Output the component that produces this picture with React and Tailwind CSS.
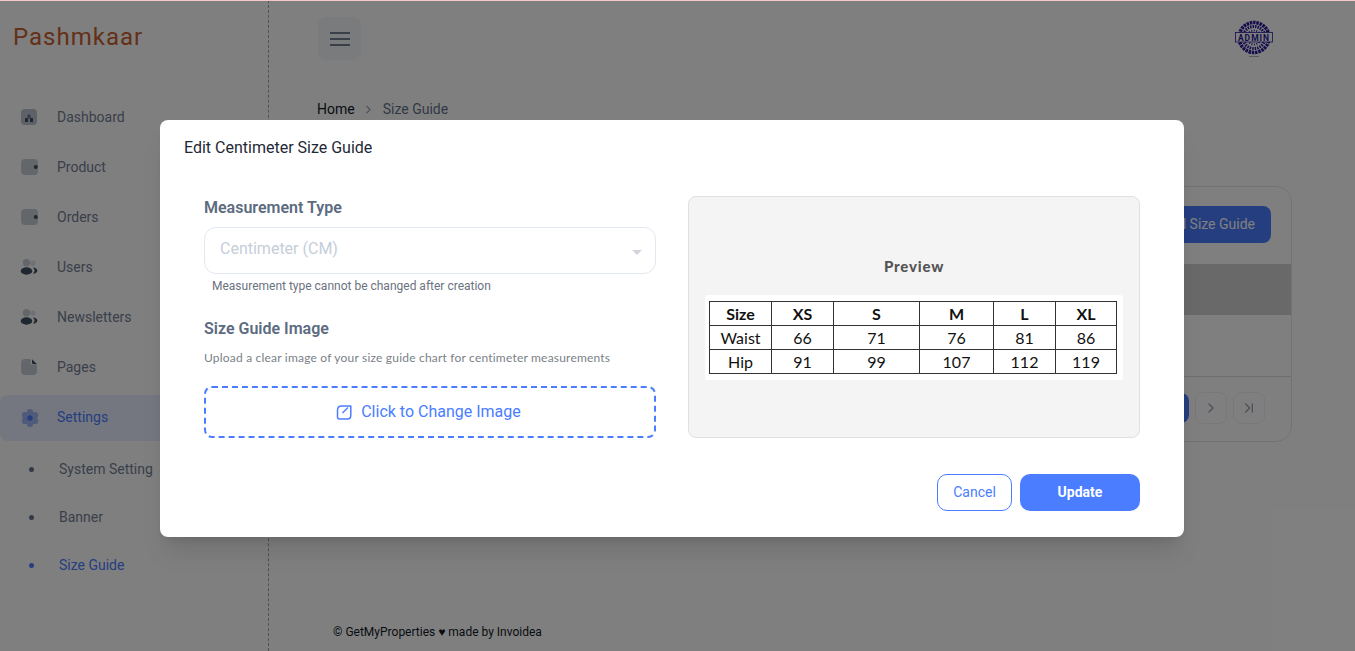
import { ChevronRight, ChevronLast } from 'lucide-react'

const DashboardIcon = () => (
  <svg width="18" height="18" viewBox="0 0 18 18" className="shrink-0">
    <rect x="1" y="1" width="16" height="16" rx="4" fill="#bcc5d0" />
    <rect x="5" y="10" width="3" height="4" rx="0.6" fill="#3f4f60" />
    <rect x="10" y="10" width="3" height="4" rx="0.6" fill="#3f4f60" />
    <rect x="7.500" y="6.500" width="3" height="4" rx="0.6" fill="#66768a" />
  </svg>
)

const WalletIcon = () => (
  <svg width="18" height="18" viewBox="0 0 18 18" className="shrink-0">
    <rect x="1" y="1" width="17" height="16" rx="4" fill="#c6ccd4" />
    <circle cx="15.800" cy="9" r="2" fill="#3f4f60" />
  </svg>
)

const UsersIcon = () => (
  <svg width="18" height="18" viewBox="0 0 18 18" className="shrink-0">
    <circle cx="6.500" cy="4.800" r="3.700" fill="#c6ccd4" />
    <circle cx="13" cy="5.200" r="2.600" fill="#dde1e6" />
    <ellipse cx="6.500" cy="13" rx="5.800" ry="3.700" fill="#3f4f60" />
    <path d="M12.800 9.600c2.600 0.200 4.600 1.600 4.600 3.100s-2 2.800-4.400 3c1-1 1.500-2 1.500-3.100s-.6-2.200-1.700-3z" fill="#3f4f60" />
  </svg>
)

const PageIcon = () => (
  <svg width="18" height="18" viewBox="0 0 18 18" className="shrink-0">
    <path d="M4.500 1h5.300c.6 0 1 .4 1 1v3.200c0 1 .9 1.900 1.900 1.900H16c.6 0 1 .4 1 1v5.400c0 2-1.600 3.500-3.500 3.500h-9C2.600 17 1 15.400 1 13.500v-9C1 2.600 2.600 1 4.500 1z" fill="#c6ccd4" />
    <path d="M12 1.200l5 5h-3.500c-.8 0-1.500-.7-1.500-1.500z" fill="#3f4f60" />
  </svg>
)

const GearIcon = () => (
  <svg width="20" height="20" viewBox="0 0 20 20" className="shrink-0">
    <g fill="#9fb6f2">
      <circle cx="10" cy="4.200" r="3.200" />
      <circle cx="15" cy="7.100" r="3.200" />
      <circle cx="15" cy="12.900" r="3.200" />
      <circle cx="10" cy="15.800" r="3.200" />
      <circle cx="5" cy="12.900" r="3.200" />
      <circle cx="5" cy="7.100" r="3.200" />
      <circle cx="10" cy="10" r="5" />
    </g>
    <circle cx="10" cy="10" r="2.700" fill="#4a7dff" />
  </svg>
)

const NAV = [
  { label: 'Dashboard', icon: <DashboardIcon /> },
  { label: 'Product', icon: <WalletIcon /> },
  { label: 'Orders', icon: <WalletIcon /> },
  { label: 'Users', icon: <UsersIcon /> },
  { label: 'Newsletters', icon: <UsersIcon /> },
  { label: 'Pages', icon: <PageIcon /> },
]

const SUB_NAV = [
  { label: 'System Setting' },
  { label: 'Banner' },
  { label: 'Size Guide', active: true },
]

const COLUMNS = [62, 62, 86, 74, 62, 61]

const SIZE_ROWS = [
  ['Size', 'XS', 'S', 'M', 'L', 'XL'],
  ['Waist', '66', '71', '76', '81', '86'],
  ['Hip', '91', '99', '107', '112', '119'],
]

const AdminStamp = () => (
  <svg width="40" height="40" viewBox="0 0 40 40">
    <circle cx="20" cy="18.500" r="15" fill="none" stroke="#2a1a9c" strokeWidth="3.500" strokeDasharray="2.500 0.800" />
    <circle cx="20" cy="18.500" r="11" fill="none" stroke="#2a1a9c" strokeWidth="3" strokeDasharray="1.500 1" />
    <circle cx="20" cy="18.500" r="7" fill="none" stroke="#2a1a9c" strokeWidth="2" strokeDasharray="1 1.500" />
    <rect x="1.500" y="13.500" width="37" height="9.500" fill="#fff" stroke="#2a1a9c" strokeWidth="0.800" />
    <text x="20" y="21.500" textAnchor="middle" fontSize="8.500" fontWeight="700" letterSpacing="1" fill="#2a1a9c" fontFamily="Roboto, sans-serif">ADMIN</text>
    <rect x="15" y="37" width="10" height="1" fill="#b0b0b0" />
  </svg>
)

const SizeTable = () => (
  <div className="bg-white w-[418px] h-[85px] rounded-[3px] pt-[6px] pl-[4px]">
    <table className="table-fixed border-collapse h-[73px] w-[407px] font-['Lato',sans-serif] text-[16px] leading-none text-[#111]">
      <colgroup>
        {COLUMNS.map((w, i) => <col key={i} style={{ width: w }} />)}
      </colgroup>
      <tbody>
        {SIZE_ROWS.map((row, r) => (
          <tr key={row[0]} className="h-[24px]">
            {row.map((cell) => (
              <td key={cell} className={`border border-[#333] p-0 text-center ${r === 0 ? 'font-bold' : ''}`}>{cell}</td>
            ))}
          </tr>
        ))}
      </tbody>
    </table>
  </div>
)

const App = () => {
  return (
    <div className="relative flex h-[651px] w-[1355px] overflow-hidden bg-white font-['Roboto',sans-serif]">
      {/* Sidebar */}
      <aside className="w-[269px] shrink-0 border-r border-dashed border-[#9ca3af]">
        <div className="pl-[13px] pt-[20px] h-[92px] text-[24px] leading-[34px] tracking-[1px] text-[#c86030]">Pashmkaar</div>
        <nav className="pr-[1px]">
          {NAV.map((item) => (
            <div key={item.label} className="flex items-center h-[50px] pl-[20px] gap-[19px] text-sm text-[#748094]">
              {item.icon}
              <span>{item.label}</span>
            </div>
          ))}
          <div className="flex items-center h-[46px] mt-[3px] pl-[20px] gap-[17px] rounded-lg bg-[#e8eeff] text-sm text-[#4a7dff]">
            <GearIcon />
            <span className="pb-[2px]">Settings</span>
          </div>
          <div className="pt-[4px]">
            {SUB_NAV.map((item) => (
              <div key={item.label} className={`flex items-center h-[48px] pl-[29px] gap-[25px] text-sm ${item.active ? 'text-[#4a7dff]' : 'text-[#748094]'}`}>
                <span className={`w-[5px] h-[5px] rounded-full ${item.active ? 'bg-[#4a7dff]' : 'bg-[#64748b]'}`} />
                <span>{item.label}</span>
              </div>
            ))}
          </div>
        </nav>
      </aside>

      {/* Main */}
      <main className="flex-1 flex flex-col pl-[48px] pr-[63px]">
        <header className="flex items-center justify-between h-[76px] pt-[1px]">
          <button className="flex flex-col items-center justify-center gap-[4px] w-[43px] h-[43px] ml-[1px] rounded-lg bg-[#f5f7fa]">
            <span className="w-[20px] h-[2px] bg-[#748094]" />
            <span className="w-[20px] h-[2px] bg-[#748094]" />
            <span className="w-[20px] h-[2px] bg-[#748094]" />
          </button>
          <div className="mr-[18px] mt-[1px]"><AdminStamp /></div>
        </header>

        <div className="flex items-center gap-[7px] mt-[24px] h-[18px] text-sm">
          <span className="text-[#111827]">Home</span>
          <ChevronRight size={13} className="text-[#94a3b8]" />
          <span className="ml-[1px] text-[#64748b]">Size Guide</span>
        </div>

        <section className="mt-[68px] h-[256px] rounded-2xl border border-[#e5e7eb] flex flex-col">
          <div className="flex justify-end items-center h-[77px] pr-[20px] pb-[2px]">
            <button className="h-[37px] px-[16px] pb-[2px] rounded-lg bg-[#4a7dff] text-sm text-white">Add Size Guide</button>
          </div>
          <div className="h-[51px] bg-[#d0d3d0]" />
          <div className="h-[62px] border-b border-[#d9dce0]" />
          <div className="flex justify-end items-center gap-[6px] flex-1 pr-[26px] pb-[2px]">
            <button className="w-[30px] h-[30px] rounded-lg bg-[#4a7dff]" />
            <button className="flex items-center justify-center w-[32px] h-[32px] rounded-lg border border-[#eef0f2] text-[#94a3b8]"><ChevronRight size={16} /></button>
            <button className="flex items-center justify-center w-[32px] h-[32px] rounded-lg border border-[#eef0f2] text-[#94a3b8]"><ChevronLast size={16} /></button>
          </div>
        </section>

        <footer className="mt-auto mb-[12px] ml-[16px] text-xs leading-[14px] text-[#111827]">© GetMyProperties ♥ made by Invoidea</footer>
      </main>

      <div className="absolute inset-x-0 top-0 h-[1px] bg-[#f4c6cc] z-20" />

      {/* Edit modal */}
      <div className="absolute inset-0 z-10 bg-black/50">
        <div className="ml-[160px] mt-[120px] w-[1024px] h-[417px] rounded-lg bg-white shadow-xl">
          <h2 className="pl-[24px] pt-[18px] text-base leading-[19px] text-[#1f2937]">Edit Centimeter Size Guide</h2>

          <div className="flex gap-[32px] pl-[44px] pr-[44px] mt-[39px] h-[242px]">
            <div className="w-[452px] pt-[2px]">
              <label className="block text-base leading-[19px] font-semibold text-[#5c6b80]">Measurement Type</label>
              <div className="relative mt-[10px] h-[47px] flex items-center pl-[15px] pb-[3px] rounded-xl border border-[#e2e8f0] text-base text-[#c5ced9]">
                Centimeter (CM)
                <span className="absolute right-[13px] top-[22px] border-x-[5px] border-t-[5px] border-x-transparent border-t-[#d1d5db]" />
              </div>
              <p className="mt-[5px] pl-[8px] text-xs leading-[14px] text-[#6b7280]">Measurement type cannot be changed after creation</p>
              <label className="block mt-[26px] text-base leading-[19px] font-semibold text-[#5c6b80]">Size Guide Image</label>
              <p className="mt-[13px] font-['Lato',sans-serif] text-xs leading-[14px] tracking-[0.2px] text-[#7a7f87]">Upload a clear image of your size guide chart for centimeter measurements</p>
              <div className="flex items-center justify-center gap-[8px] mt-[21px] pr-[4px] h-[52px] rounded-lg border-2 border-dashed border-[#4a7dff] text-base text-[#4a7dff]">
                <svg width="17" height="17" viewBox="0 0 17 17" fill="none" stroke="#4a7dff" strokeWidth="1.500" strokeLinejoin="round" className="ml-[1px]">
                  <path d="M5.500 2H14.800V11.500C14.800 13.500 13.500 15 11.500 15H3.500C2.500 15 1.500 14 1.500 13V6.500C1.500 4 3 2 5.500 2Z" />
                  <path d="M6.500 9L12 3.500" />
                </svg>
                <span>Click to Change Image</span>
              </div>
            </div>

            <div className="w-[452px] flex flex-col items-center rounded-lg border border-[#e0e0e0] bg-[#f4f4f4]">
              <p className="mt-[60px] font-['Lato',sans-serif] text-[15px] leading-[18px] font-black tracking-[0.8px] text-[#555]">Preview</p>
              <div className="mt-[20px]"><SizeTable /></div>
            </div>
          </div>

          <div className="flex justify-end gap-[8px] pr-[44px] mt-[36px]">
            <button className="w-[75px] h-[37px] pb-[2px] rounded-[10px] border border-[#4a7dff] text-sm text-[#4a7dff]">Cancel</button>
            <button className="w-[120px] h-[37px] pb-[2px] rounded-[10px] bg-[#4a7dff] text-sm font-bold text-white">Update</button>
          </div>
        </div>
      </div>
    </div>
  )
}

export default App
